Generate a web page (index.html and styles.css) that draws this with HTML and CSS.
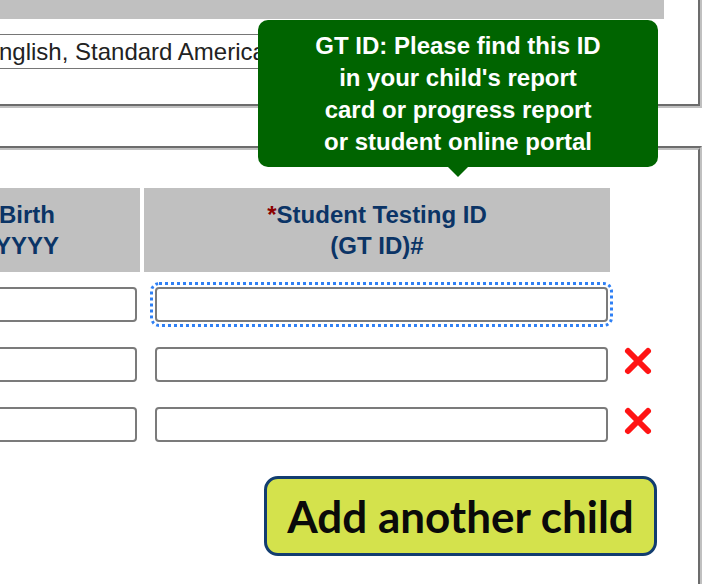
FILE: index.html
```html
<!DOCTYPE html>
<html lang="en">
<head>
    <meta charset="UTF-8">
    <meta name="viewport" content="width=device-width, initial-scale=1.0">
    <title>Student Registration - Children</title>
    <link rel="stylesheet" href="styles.css">
</head>
<body>

    <div class="page">
        <div class="tooltip">GT ID: Please find this ID<br>in your child's report<br>card or progress report<br>or student online portal</div>

        <fieldset class="box box-lang">
            <div class="box-bar"></div>
            <select class="lang-select">
                <option>English, Standard American</option>
            </select>
        </fieldset>

        <fieldset class="box box-children">
            <div class="child-grid">
                <div class="head">Date of Birth<br>MM/DD/YYYY</div>
                <div class="head"><span class="req">*</span>Student Testing ID<br>(GT ID)#</div>
                <div class="head-blank"></div>

                <div class="cell cell-dob"><input type="text" class="field field-dob"></div>
                <div class="cell"><input type="text" class="field field-gtid focused"></div>
                <div class="cell"></div>

                <div class="cell cell-dob"><input type="text" class="field field-dob"></div>
                <div class="cell"><input type="text" class="field field-gtid"></div>
                <div class="cell">
                    <svg class="remove" width="30" height="30" viewBox="0 0 30 30">
                        <path d="M5 5 L25 25 M25 5 L5 25" />
                    </svg>
                </div>

                <div class="cell cell-dob"><input type="text" class="field field-dob"></div>
                <div class="cell"><input type="text" class="field field-gtid"></div>
                <div class="cell">
                    <svg class="remove" width="30" height="30" viewBox="0 0 30 30">
                        <path d="M5 5 L25 25 M25 5 L5 25" />
                    </svg>
                </div>
            </div>

            <div class="actions">
                <button type="button" class="add-btn">Add another child</button>
            </div>
        </fieldset>
    </div>

</body>
</html>
```

FILE: styles.css
```css
html {
    overflow: hidden;
}
body {
    margin: 0;
    font-family: "Liberation Sans", Arial, sans-serif;
    color: #333;
    background-color: #fff;
}
.page {
    position: relative;
    width: 1000px;
    margin-left: -298px; /* page is scrolled sideways */
    margin-top: -30px;
}
.box {
    margin: 0;
    border: 4px groove #c0c0c0;
    min-width: 0;
}
.box-lang {
    padding: 6px 34px 35px 20px;
}
.box-bar {
    height: 39px;
    background-color: #c0c0c0;
}
.lang-select {
    display: block;
    appearance: none;
    width: 300px;
    height: 35px;
    margin: 15px 0 0 252px;
    padding: 0 4px;
    border: 1px solid #767676;
    border-radius: 0;
    background-color: #fff;
    font-family: "Liberation Sans", Arial, sans-serif;
    font-size: 24px;
    color: #222;
}
.box-children {
    margin-top: 38px;
    padding: 38px 0 40px 120px;
}
.child-grid {
    display: grid;
    grid-template-columns: 314px 466px 84px;
    column-gap: 4px;
}
.head {
    background-color: #c0c0c0;
    color: #0b3466;
    font-weight: bold;
    font-size: 24px;
    line-height: 31px;
    text-align: center;
    padding: 11px 0;
}
.req {
    color: #8b0000;
}
.cell {
    padding: 15px 0 10px;
    display: flex;
}
.cell-dob {
    justify-content: flex-end;
}
.field {
    box-sizing: border-box;
    height: 35px;
    border: 2px solid #7b7b7b;
    border-radius: 4px;
    background-color: #fff;
}
.field-dob {
    width: 260px;
    margin-right: 3px;
}
.field-gtid {
    width: 453px;
    margin-left: 11px;
}
.focused {
    outline: 3px dotted #2f80f5;
    outline-offset: 2px;
}
.remove {
    margin: -1px 0 0 9px;
}
.remove path {
    fill: none;
    stroke: #ff1414;
    stroke-width: 6;
    stroke-linecap: round;
}
.actions {
    display: flex;
    justify-content: flex-end;
    padding-right: 41px;
    margin-top: 24px;
}
.add-btn {
    box-sizing: border-box;
    width: 393px;
    height: 80px;
    background-color: #d4e24c;
    border: 3px solid #123d70;
    border-radius: 14px;
    font-family: Lato, "Open Sans", sans-serif;
    font-weight: bold;
    font-size: 44px;
    color: #0a0a0a;
    padding: 0;
}
.tooltip {
    position: absolute;
    left: 556px;
    top: 50px;
    width: 400px;
    box-sizing: border-box;
    padding: 10px 0 9px;
    background-color: #006400;
    border-radius: 10px;
    color: #fff;
    font-weight: bold;
    font-size: 24px;
    line-height: 32px;
    text-align: center;
    z-index: 2;
}
.tooltip::after {
    content: "";
    position: absolute;
    top: 100%;
    left: 50%;
    margin-left: -10px;
    border-left: 10px solid transparent;
    border-right: 10px solid transparent;
    border-top: 10px solid #006400;
}
```
